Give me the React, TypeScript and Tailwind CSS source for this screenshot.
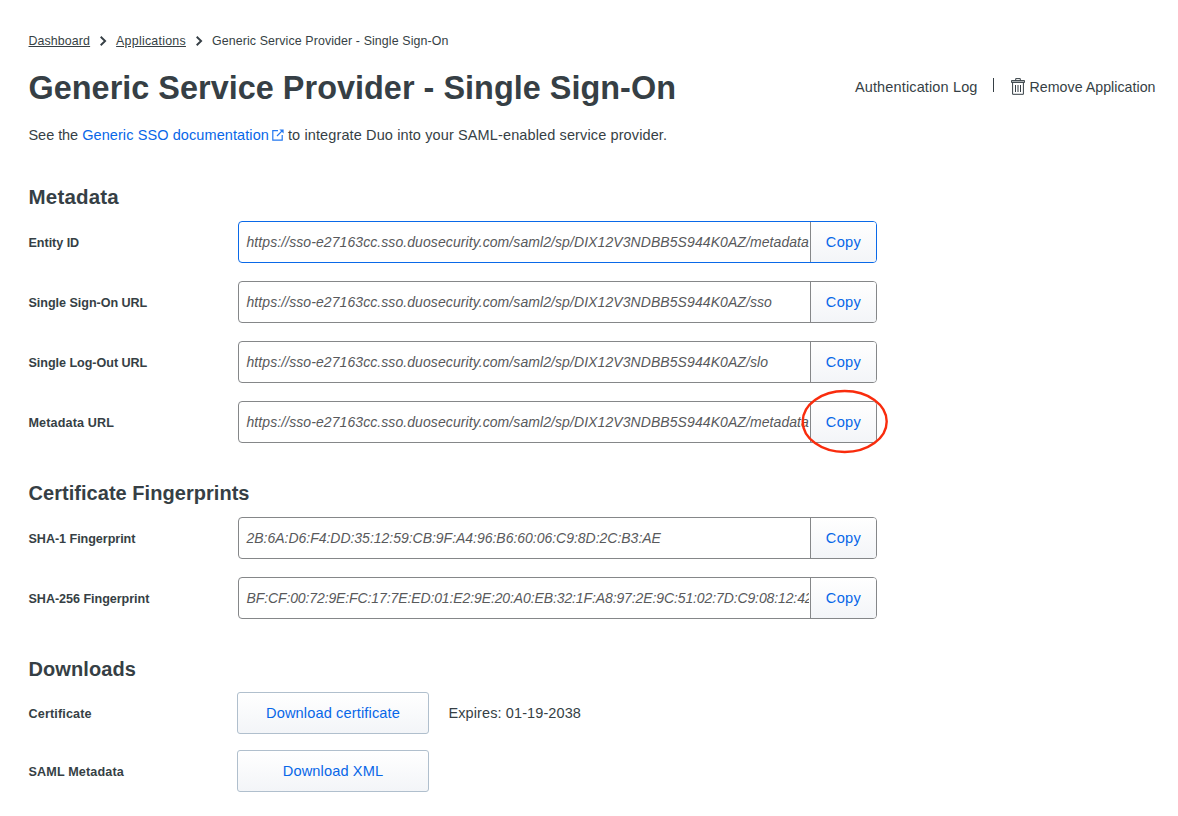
import React from "react";

const BASE = "https://sso-e27163cc.sso.duosecurity.com/saml2/sp/DIX12V3NDBB5S944K0AZ/";

function Chevron() {
  return (
    <svg className="mx-[9px] h-[10px] w-2 shrink-0" viewBox="0 0 8 10" fill="none" stroke="#363f45" strokeWidth="1.9">
      <path d="M1.7 .8 6.1 5 1.7 9.2" />
    </svg>
  );
}

function ExternalIcon() {
  return (
    <svg className="ml-[3px] mr-1 h-3 w-3 shrink-0" viewBox="0 0 12 12" fill="none" stroke="#2478f0" strokeWidth="1.2">
      <path d="M6 1.6H.8v9.6h9.4V6" />
      <path d="M5 7 10.6 1.4" />
      <path d="M7.4.4h4.2v4.2z" fill="#2478f0" stroke="none" />
    </svg>
  );
}

function TrashIcon() {
  return (
    <svg className="mr-[5px] mb-[4px] h-[17px] w-[14px] shrink-0" viewBox="0 0 14 17" fill="none" stroke="#363f45">
      <path d="M4.7 2.5V.6h4.6v1.9" />
      <path d="M.5 2.5h13v2H.5z" fill="#aab0b3" strokeWidth=".9" />
      <path d="M1.6 4.5v11.8h10.8V4.5" />
      <path d="M4.5 7v7M7 7v7M9.5 7v7" />
    </svg>
  );
}

interface FieldProps {
  label: string;
  value: string;
  labelClass?: string;
  valueClass?: string;
  active?: boolean;
  circled?: boolean;
}

function Field({ label, value, labelClass = "tracking-[-0.05px]", valueClass = "tracking-[0.08px]", active, circled }: FieldProps) {
  return (
    <div className="flex h-[42px] items-center">
      <div className={`w-[209.5px] shrink-0 pt-0.5 text-[12.6px] font-bold ${labelClass}`}>{label}</div>
      <div className={`relative flex h-[42px] w-[639px] rounded-[4px] border ${active ? "border-[#0a69e8]" : "border-[#858789]"}`}>
        <div className={`mr-px w-[570px] overflow-hidden whitespace-nowrap pl-[7.5px] text-sm leading-10 text-[#58595b] italic ${valueClass}`}>{value}</div>
        <button className="flex-1 rounded-r-[3px] border-l border-[#858789] bg-linear-to-b from-white to-[#f3f5f8] text-[14.6px] leading-10 tracking-[0.35px] text-[#0867e8]">Copy</button>
        {circled && (
          <svg className="pointer-events-none absolute top-[-13px] left-[562px] h-[65px] w-[90px]" viewBox="0 0 90 65" fill="none">
            <ellipse cx="43.7" cy="32.5" rx="42" ry="30.5" stroke="#f92c0d" strokeWidth="2.4" />
          </svg>
        )}
      </div>
    </div>
  );
}

function Download({ label, action, note }: { label: string; action: string; note?: string }) {
  return (
    <div className="flex h-[42px] items-center">
      <div className="w-[208.5px] shrink-0 pt-0.5 text-[12.6px] font-bold tracking-[0.15px]">{label}</div>
      <button className="h-[42px] w-[192px] rounded-[3px] border border-[#b0bfcd] bg-linear-to-b from-white to-[#f3f5f8] text-[14.6px] leading-10 tracking-[0.13px] text-[#0867e8]">
        {action}
      </button>
      {note && <span className="ml-[19.5px] text-[14.5px] leading-[42px] tracking-[0.1px]">{note}</span>}
    </div>
  );
}

export default function App() {
  return (
    <main className="h-[816px] overflow-hidden bg-white pt-8 pl-[28.5px] font-['Liberation_Sans',Arial,sans-serif] text-[#363f45]">
      <nav className="flex h-[18px] items-center text-[12.4px] tracking-[0.11px] whitespace-nowrap">
        <a className="underline underline-offset-1">Dashboard</a>
        <Chevron />
        <a className="tracking-[0.25px] underline underline-offset-1">Applications</a>
        <Chevron />
        <span>Generic Service Provider - Single Sign-On</span>
      </nav>
      <header className="mt-[18px] flex h-10 items-center justify-between pr-[22.5px]">
        <h1 className="text-[32.4px] leading-10 font-bold tracking-[0.03px] whitespace-nowrap">Generic Service Provider - Single Sign-On</h1>
        <div className="flex h-10 items-center text-[14.2px] leading-[20px] whitespace-nowrap">
          <span className="mb-[3px] text-[14.5px] tracking-[0.14px]">Authentication Log</span>
          <span className="mr-[17px] ml-[15px] mb-[6px] h-[14px] w-px bg-[#363f45]" />
          <TrashIcon />
          <span className="mb-[3px] tracking-[0.03px]">Remove Application</span>
        </div>
      </header>
      <p className="mt-[17px] flex h-5 items-center text-[14.5px] leading-[20px] tracking-[0.12px] whitespace-nowrap">
        <span className="tracking-[-0.05px]">See the&nbsp;</span>
        <a className="tracking-[0.09px] text-[#0867e8]">Generic SSO documentation</a>
        <ExternalIcon />
        <span>to integrate Duo into your SAML-enabled service provider.</span>
      </p>
      <h2 className="mt-10 h-6 text-[20.5px] leading-6 font-bold tracking-[0.2px]">Metadata</h2>
      <div className="mt-3 flex flex-col gap-[18px]">
        <Field label="Entity ID" value={BASE + "metadata"} active />
        <Field label="Single Sign-On URL" value={BASE + "sso"} />
        <Field label="Single Log-Out URL" value={BASE + "slo"} />
        <Field label="Metadata URL" labelClass="tracking-[0.13px]" value={BASE + "metadata"} circled />
      </div>
      <h2 className="mt-[38px] h-6 text-xl leading-6 font-bold tracking-[0.04px]">Certificate Fingerprints</h2>
      <div className="mt-3 flex flex-col gap-[18px]">
        <Field
          label="SHA-1 Fingerprint"
          value="2B:6A:D6:F4:DD:35:12:59:CB:9F:A4:96:B6:60:06:C9:8D:2C:B3:AE"
          valueClass="tracking-[-0.02px]"
        />
        <Field
          label="SHA-256 Fingerprint"
          value="BF:CF:00:72:9E:FC:17:7E:ED:01:E2:9E:20:A0:EB:32:1F:A8:97:2E:9C:51:02:7D:C9:08:12:42"
          valueClass="tracking-[-0.11px]"
        />
      </div>
      <h2 className="mt-[38px] h-6 text-xl leading-6 font-bold tracking-[0.1px]">Downloads</h2>
      <div className="mt-[11px] flex flex-col gap-4">
        <Download label="Certificate" action="Download certificate" note="Expires: 01-19-2038" />
        <Download label="SAML Metadata" action="Download XML" />
      </div>
    </main>
  );
}
